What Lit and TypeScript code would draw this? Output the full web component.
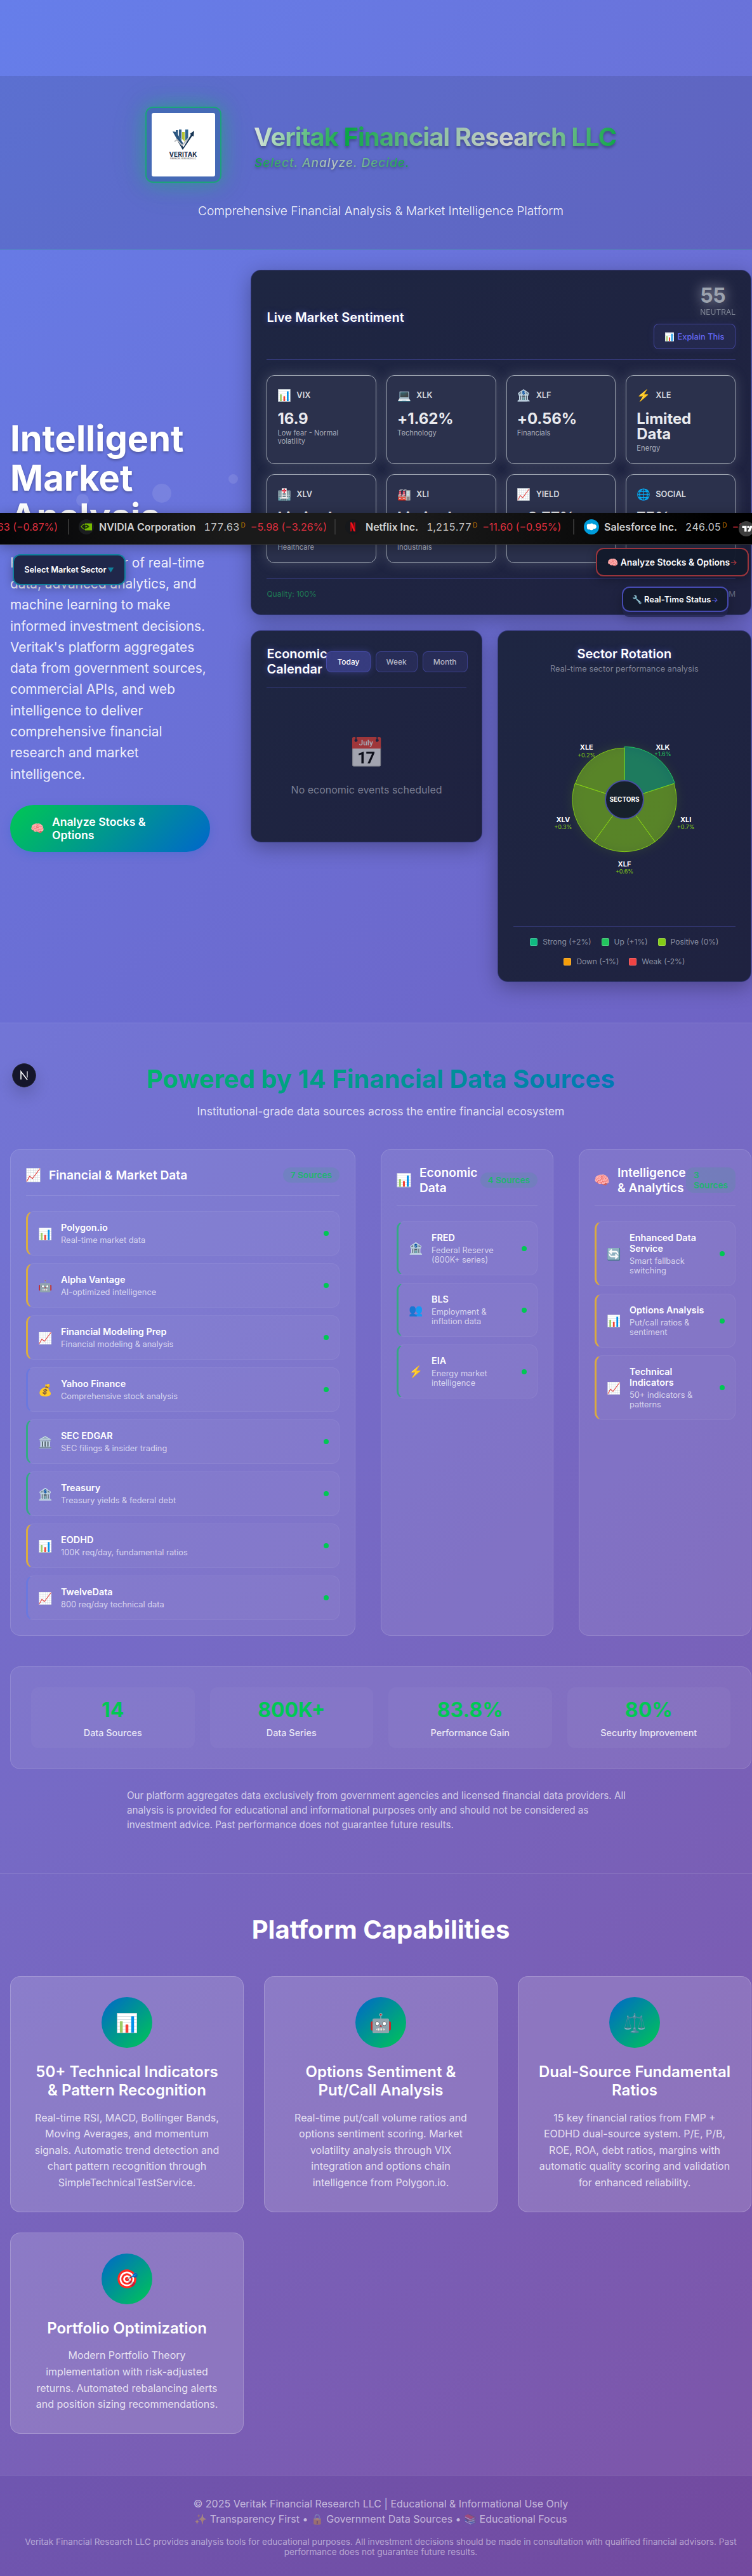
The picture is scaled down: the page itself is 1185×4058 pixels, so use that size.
import { LitElement, html, css, svg } from "lit";
import { customElement } from "lit/decorators.js";

const FONT = css`Inter, "Liberation Sans", "Noto Color Emoji", sans-serif`;

type Metric = { icon: string; name: string; value: string; note: string };
const METRICS: Metric[] = [
  { icon: "📊", name: "VIX", value: "16.9", note: "Low fear - Normal volatility" },
  { icon: "💻", name: "XLK", value: "+1.62%", note: "Technology" },
  { icon: "🏦", name: "XLF", value: "+0.56%", note: "Financials" },
  { icon: "⚡", name: "XLE", value: "Limited Data", note: "Energy" },
  { icon: "🏥", name: "XLV", value: "Limited Data", note: "Healthcare" },
  { icon: "🏭", name: "XLI", value: "Limited Data", note: "Industrials" },
  { icon: "📈", name: "YIELD", value: "+0.77%", note: "10Y-2Y" },
  { icon: "🌐", name: "SOCIAL", value: "75%", note: "Sentiment" },
];

type Source = { icon: string; name: string; desc: string; tier: "premium" | "free" | "gov" };
type Group = { icon: string; title: string; count: string; narrow?: boolean; items: Source[] };
const GROUPS: Group[] = [
  {
    icon: "📈", title: "Financial & Market Data", count: "7 Sources",
    items: [
      { icon: "📊", name: "Polygon.io", desc: "Real-time market data", tier: "premium" },
      { icon: "🤖", name: "Alpha Vantage", desc: "AI-optimized intelligence", tier: "premium" },
      { icon: "📈", name: "Financial Modeling Prep", desc: "Financial modeling & analysis", tier: "premium" },
      { icon: "💰", name: "Yahoo Finance", desc: "Comprehensive stock analysis", tier: "free" },
      { icon: "🏛️", name: "SEC EDGAR", desc: "SEC filings & insider trading", tier: "gov" },
      { icon: "🏦", name: "Treasury", desc: "Treasury yields & federal debt", tier: "gov" },
      { icon: "📊", name: "EODHD", desc: "100K req/day, fundamental ratios", tier: "premium" },
      { icon: "📈", name: "TwelveData", desc: "800 req/day technical data", tier: "free" },
    ],
  },
  {
    icon: "📊", title: "Economic Data", count: "4 Sources",
    items: [
      { icon: "🏦", name: "FRED", desc: "Federal Reserve (800K+ series)", tier: "gov" },
      { icon: "👥", name: "BLS", desc: "Employment & inflation data", tier: "gov" },
      { icon: "⚡", name: "EIA", desc: "Energy market intelligence", tier: "gov" },
    ],
  },
  {
    icon: "🧠", title: "Intelligence & Analytics", count: "3 Sources", narrow: true,
    items: [
      { icon: "🔄", name: "Enhanced Data Service", desc: "Smart fallback switching", tier: "premium" },
      { icon: "📊", name: "Options Analysis", desc: "Put/call ratios & sentiment", tier: "premium" },
      { icon: "📈", name: "Technical Indicators", desc: "50+ indicators & patterns", tier: "premium" },
    ],
  },
];

const STATS = [
  ["14", "Data Sources"],
  ["800K+", "Data Series"],
  ["83.8%", "Performance Gain"],
  ["80%", "Security Improvement"],
];

const CAPABILITIES = [
  { icon: "📊", title: "50+ Technical Indicators & Pattern Recognition", text: "Real-time RSI, MACD, Bollinger Bands, Moving Averages, and momentum signals. Automatic trend detection and chart pattern recognition through SimpleTechnicalTestService." },
  { icon: "🤖", title: "Options Sentiment & Put/Call Analysis", text: "Real-time put/call volume ratios and options sentiment scoring. Market volatility analysis through VIX integration and options chain intelligence from Polygon.io." },
  { icon: "⚖️", title: "Dual-Source Fundamental Ratios", text: "15 key financial ratios from FMP + EODHD dual-source system. P/E, P/B, ROE, ROA, debt ratios, margins with automatic quality scoring and validation for enhanced reliability." },
  { icon: "🎯", title: "Portfolio Optimization", text: "Modern Portfolio Theory implementation with risk-adjusted returns. Automated rebalancing alerts and position sizing recommendations." },
];

const SECTORS = [
  { name: "XLK", pct: "+1.6%", r: 83.5, color: "#22c55e", fill: "#10b981", lx: 235.3, ly: 145.5, dy: 10.8 },
  { name: "XLI", pct: "+0.7%", r: 82, color: "#84cc16", fill: "#84cc16", lx: 271.7, ly: 260, dy: 11 },
  { name: "XLF", pct: "+0.6%", r: 82, color: "#84cc16", fill: "#84cc16", lx: 175, ly: 330, dy: 11 },
  { name: "XLV", pct: "+0.3%", r: 82, color: "#84cc16", fill: "#84cc16", lx: 78.3, ly: 260, dy: 11 },
  { name: "XLE", pct: "+0.2%", r: 81.5, color: "#84cc16", fill: "#84cc16", lx: 115.3, ly: 146, dy: 12 },
];

const LEGEND = [
  ["#10b981", "Strong (+2%)"],
  ["#22c55e", "Up (+1%)"],
  ["#84cc16", "Positive (0%)"],
  ["#f59e0b", "Down (-1%)"],
  ["#ef4444", "Weak (-2%)"],
];

/** Path of one 72 degree slice around the chart centre. */
function slice(i: number, r: number): string {
  const cx = 175, cy = 224.7;
  const p = (a: number) => {
    const t = ((a - 90) * Math.PI) / 180;
    return `${(cx + r * Math.cos(t)).toFixed(2)} ${(cy + r * Math.sin(t)).toFixed(2)}`;
  };
  return `M${cx} ${cy}L${p(i * 72)}A${r} ${r} 0 0 1 ${p(i * 72 + 72)}Z`;
}

@customElement("site-header")
class SiteHeader extends LitElement {
  static styles = css`
    :host { display: block; box-sizing: border-box; height: 273px; padding-top: 48px; background: rgba(0, 0, 0, 0.1); border-bottom: 1px solid rgba(0, 200, 83, 0.3); }
    .brand { display: flex; align-items: center; justify-content: center; gap: 52px; }
    .logo { box-sizing: border-box; width: 120px; height: 120px; padding: 8px; border: 2px solid rgba(0, 200, 83, 0.6); border-radius: 12px; background: rgba(0, 100, 120, 0.25); box-shadow: 0 0 30px rgba(0, 200, 83, 0.4), 0 0 60px rgba(0, 200, 83, 0.12); }
    .logo svg { display: block; width: 100px; height: 100px; border-radius: 3px; }
    .words { width: 570px; padding-top: 3px; }
    .name { margin: 0; font-size: 40px; font-weight: 700; line-height: 48px; white-space: nowrap; letter-spacing: -1px; margin-left: -1px; width: 573px; color: transparent; background: linear-gradient(100deg, #dfe6e0 0%, #0aa544 26%, #86bf9c 48%, #cfd0d0 70%, #0aa544 100%); -webkit-background-clip: text; background-clip: text; filter: drop-shadow(0 3px 2px rgba(0, 0, 0, 0.3)); }
    .tag { margin: 5px 0 0; width: 246px; font-size: 19.2px; line-height: 23px; font-weight: 500; font-style: italic; letter-spacing: 0.9px; white-space: nowrap; color: transparent; background: linear-gradient(90deg, #0aa544 0%, #b9c4c4 50%, #0aa544 100%); -webkit-background-clip: text; background-clip: text; filter: drop-shadow(0 2px 2px rgba(0, 0, 0, 0.35)); }
    .sub { margin: 32px 0 0; text-align: center; font-size: 19.2px; font-weight: 300; line-height: 24px; color: rgba(255, 255, 255, 0.95); }
  `;
  render() {
    return html`
      <div class="brand">
        <div class="logo">
          <svg viewBox="0 0 100 100">
            <rect width="100" height="100" fill="#fff" />
            <path d="M33 29l6 1 10 17v11z" fill="#2a5580" />
            <path d="M38 27h3.5v10L38 32zM43 26h4v17l-4-6z" fill="#345f88" />
            <path d="M48 30h4v15l-4-4z" fill="#b5c334" /><path d="M53 26h4.5v13L53 44z" fill="#2f6690" />
            <path d="M49 58l-10-17 5 4 6 9L62 34l-2-1 7-5-1 9-2-1z" fill="#173554" />
            <path d="M36 45l4-3 8 9 9-10" fill="none" stroke="#b9bcc0" stroke-width="2" />
            <text x="49.5" y="69" text-anchor="middle" font-family="Inter" font-weight="700" font-size="10" textLength="44" fill="#17304f">VERITAK</text>
            <text x="49.5" y="73.4" text-anchor="middle" font-family="Inter" font-weight="500" font-size="3.2" textLength="41" fill="#555">FINANCIAL RESEARCH LLC</text>
          </svg>
        </div>
        <div class="words">
          <h1 class="name">Veritak Financial Research LLC</h1>
          <p class="tag">Select. Analyze. Decide.</p>
        </div>
      </div>
      <p class="sub">Comprehensive Financial Analysis &amp; Market Intelligence Platform</p>
    `;
  }
}

const panel = css`
  .panel { box-sizing: border-box; padding: 24px; border: 1px solid rgba(99, 102, 241, 0.3); border-radius: 16px; background: linear-gradient(135deg, #1e2642 0%, #1f2240 100%); box-shadow: 0 8px 32px rgba(0, 0, 0, 0.3); }
  .h { margin: 0; font-size: 20px; line-height: 24px; font-weight: 600; color: #fff; text-shadow: 0 0 10px rgba(99, 102, 241, 0.6); }
`;

@customElement("market-sentiment")
class MarketSentiment extends LitElement {
  static styles = [panel, css`
    :host { display: block; }
    .panel { height: 544px; }
    .top { display: flex; align-items: center; justify-content: space-between; height: 100px; padding-bottom: 16px; border-bottom: 1px solid rgba(99, 102, 241, 0.35); }
    .side { display: flex; flex-direction: column; align-items: flex-end; }
    .score { color: #9ca3af; text-shadow: 0 0 20px rgba(200, 200, 210, 0.9); }
    .num { font-size: 32px; line-height: 32px; font-weight: 700; letter-spacing: -0.5px; }
    .mood { margin-top: 2px; font-size: 12px; line-height: 15px; opacity: 0.75; }
    .explain { box-sizing: border-box; margin-top: 11px; height: 40px; width: 129px; display: flex; align-items: center; justify-content: center; gap: 4px; border: 1px solid rgba(99, 102, 241, 0.45); border-radius: 8px; background: rgba(99, 102, 241, 0.08); color: #6366f1; font-size: 12.8px; font-weight: 500; box-shadow: 0 0 12px rgba(99, 102, 241, 0.1); }
    .grid { display: grid; grid-template-columns: repeat(4, 1fr); grid-auto-rows: 140px; gap: 16px; margin-top: 24px; }
    .card { box-sizing: border-box; padding: 16px; border: 1px solid #9ca3af; border-radius: 12px; background: #2b314c; box-shadow: 0 0 20px rgba(156, 163, 175, 0.3); color: #e9eaee; }
    .row { display: flex; align-items: center; gap: 8px; height: 28px; }
    .icon { font-size: 17.6px; }
    .label { font-size: 12.8px; font-weight: 600; color: #d5d8de; }
    .value { margin-top: 12px; font-size: 24px; line-height: 24px; font-weight: 700; letter-spacing: -0.1px; }
    .note { margin-top: 4px; font-size: 11.2px; line-height: 13px; color: #a9adba; }
    .foot { display: flex; justify-content: space-between; margin-top: 24px; padding-top: 16px; border-top: 1px solid rgba(99, 102, 241, 0.25); font-size: 12px; line-height: 15px; color: #666b80; }
    .q { color: #1e7d55; }
  `];
  render() {
    return html`
      <div class="panel">
        <div class="top">
          <h3 class="h">Live Market Sentiment</h3>
          <div class="side">
            <div class="score"><div class="num">55</div><div class="mood">NEUTRAL</div></div>
            <div class="explain"><span>📊</span><span>Explain This</span></div>
          </div>
        </div>
        <div class="grid">
          ${METRICS.map((m) => html`
            <div class="card">
              <div class="row"><span class="icon">${m.icon}</span><span class="label">${m.name}</span></div>
              <div class="value">${m.value}</div>
              <div class="note">${m.note}</div>
            </div>`)}
        </div>
        <div class="foot"><span class="q">Quality: 100%</span><span>Updated: 8:38:07 PM</span></div>
      </div>
    `;
  }
}

@customElement("economic-calendar")
class EconomicCalendar extends LitElement {
  static styles = [panel, css`
    .panel { height: 334px; }
    .top { display: flex; align-items: center; justify-content: space-between; height: 48px; padding-bottom: 16px; border-bottom: 1px solid rgba(99, 102, 241, 0.35); }
    .h { width: 94px; }
    .tabs { display: flex; gap: 8px; flex: none; }
    .tab { box-sizing: border-box; height: 33px; padding: 0 16px; line-height: 31px; border: 1px solid rgba(99, 102, 241, 0.35); border-radius: 8px; background: rgba(99, 102, 241, 0.13); color: #b3b5c6; font-size: 12px; font-weight: 500; }
    .on { background: rgba(99, 102, 241, 0.35); color: #fff; box-shadow: 0 0 12px rgba(99, 102, 241, 0.3); }
    .empty { display: flex; flex-direction: column; align-items: center; padding-top: 74px; color: #7a7e92; font-size: 16px; line-height: 20px; }
    .big { font-size: 46px; line-height: 56px; opacity: 0.6; margin-bottom: 21px; }
  `];
  render() {
    return html`
      <div class="panel">
        <div class="top">
          <h3 class="h">Economic Calendar</h3>
          <div class="tabs"><span class="tab on">Today</span><span class="tab">Week</span><span class="tab">Month</span></div>
        </div>
        <div class="empty"><span class="big">📅</span><span>No economic events scheduled</span></div>
      </div>
    `;
  }
}

@customElement("sector-rotation")
class SectorRotation extends LitElement {
  static styles = [panel, css`
    .panel { height: 554px; }
    .h, .sub { text-align: center; }
    .sub { margin: 3px 0 0; font-size: 12.8px; line-height: 17px; color: #7f8397; }
    .chart { display: block; width: 350px; height: 350px; margin-top: -27px; overflow: visible; }
    .legend { display: flex; flex-wrap: wrap; justify-content: center; gap: 16px; margin-top: 74px; padding-top: 16px; border-top: 1px solid rgba(99, 102, 241, 0.25); font-size: 12px; line-height: 15px; color: #8b8fa0; }
    .key { display: flex; align-items: center; gap: 8px; }
    .sw { box-sizing: border-box; width: 12px; height: 12px; border-radius: 2px; border: 1px solid rgba(255, 255, 255, 0.2); }
    text { text-anchor: middle; }
    .n { font-size: 11px; font-weight: 700; fill: #fff; }
    .p { font-size: 9px; }
    .c { font-size: 10px; font-weight: 700; fill: #fff; }
  `];
  render() {
    return html`
      <div class="panel">
        <h3 class="h">Sector Rotation</h3>
        <p class="sub">Real-time sector performance analysis</p>
        <svg class="chart" viewBox="0 0 350 350">
          <defs><filter id="g" x="-30%" y="-30%" width="160%" height="160%"><feGaussianBlur stdDeviation="9" /></filter></defs>
          <circle cx="175" cy="224.7" r="82" fill="#84cc16" opacity="0.14" filter="url(#g)" />
          ${SECTORS.map((s, i) => svg`<path d=${slice(i, s.r)} fill=${s.fill} fill-opacity="0.5" stroke=${s.color} stroke-width="1" />`)}
          <circle cx="175" cy="224.7" r="30" fill="#17212b" stroke="#4750a0" stroke-width="2" />
          <text class="c" x="175" y="228">SECTORS</text>
          ${SECTORS.map((s) => svg`<text class="n" x=${s.lx} y=${s.ly}>${s.name}</text><text class="p" x=${s.lx} y=${s.ly + s.dy} fill=${s.color}>${s.pct}</text>`)}
        </svg>
        <div class="legend">${LEGEND.map(([c, t]) => html`<span class="key"><span class="sw" style="background:${c}"></span>${t}</span>`)}</div>
      </div>
    `;
  }
}

@customElement("data-sources")
class DataSources extends LitElement {
  static styles = css`
    :host { display: block; box-sizing: border-box; height: 1340px; padding: 64px 16px 0; background: rgba(255, 255, 255, 0.05); border-top: 1px solid rgba(255, 255, 255, 0.1); }
    .title { margin: 0; text-align: center; font-size: 40px; line-height: 48px; font-weight: 700; color: transparent; background: linear-gradient(135deg, #00c853, #0066cc); -webkit-background-clip: text; background-clip: text; }
    .lead { margin: 16px 0 48px; text-align: center; font-size: 17.6px; line-height: 22px; color: rgba(255, 255, 255, 0.8); }
    .groups { display: grid; grid-template-columns: 544px 272px 272px; gap: 40px; height: 767px; }
    .group, .stats { box-sizing: border-box; padding: 24px; border: 1px solid rgba(255, 255, 255, 0.13); border-radius: 16px; background: rgba(255, 255, 255, 0.08); }
    .head { display: flex; align-items: center; gap: 12px; min-height: 32px; padding-bottom: 16px; margin-bottom: 24px; border-bottom: 1px solid rgba(255, 255, 255, 0.13); }
    .hi { flex: none; width: 24px; font-size: 20px; display: flex; justify-content: center; }
    .ht { flex: 1; margin: 0; font-size: 19.2px; line-height: 24px; font-weight: 600; color: #fff; min-width: 0; }
    .badge { flex: none; padding: 4px 12px; border-radius: 12px; background: rgba(0, 200, 83, 0.1); color: rgba(0, 200, 83, 0.75); font-size: 13.6px; line-height: 16px; font-weight: 600; }
    .narrow .ht { flex: none; width: 108px; margin-right: -12px; white-space: normal; }
    .narrow .badge { box-sizing: border-box; width: 78px; }
    .items { display: flex; flex-direction: column; gap: 12px; }
    .item { display: flex; align-items: center; gap: 12px; padding: 16px; border: 1px solid rgba(255, 255, 255, 0.06); border-left: 3px solid; border-radius: 12px; background: rgba(255, 255, 255, 0.03); }
    .premium { border-left-color: rgba(255, 193, 7, 0.7); }
    .gov { border-left-color: rgba(0, 200, 83, 0.6); }
    .free { border-left-color: #6b78de; }
    .ii { flex: none; width: 24px; font-size: 18px; display: flex; justify-content: center; }
    .body { flex: 1; }
    .n { font-size: 14.4px; line-height: 17px; font-weight: 600; color: #fff; }
    .d { margin-top: 4px; font-size: 12.8px; line-height: 15px; color: rgba(255, 255, 255, 0.7); }
    .dot { flex: none; width: 8px; height: 8px; border-radius: 50%; background: #00c853; }
    .stats { display: grid; grid-template-columns: repeat(4, 1fr); gap: 24px; margin-top: 48px; padding: 32px; height: 162px; }
    .stat { padding: 16px 0; height: 64px; text-align: center; border-radius: 12px; background: rgba(255, 255, 255, 0.035); }
    .num { font-size: 32px; line-height: 39px; font-weight: 700; color: #00c853; }
    .cap { margin-top: 8px; font-size: 14.4px; line-height: 17px; font-weight: 500; color: rgba(255, 255, 255, 0.85); }
    .fine { width: 800px; margin: 31px auto 0; font-size: 15.2px; line-height: 22.8px; color: rgba(255, 255, 255, 0.7); }
  `;
  render() {
    return html`
      <h2 class="title">Powered by 14 Financial Data Sources</h2>
      <p class="lead">Institutional-grade data sources across the entire financial ecosystem</p>
      <div class="groups">
        ${GROUPS.map((g) => html`
          <div class="group">
            <div class="head ${g.narrow ? "narrow" : ""}"><span class="hi">${g.icon}</span><h3 class="ht">${g.title}</h3><span class="badge">${g.count}</span></div>
            <div class="items">
              ${g.items.map((s) => html`
                <div class="item ${s.tier}"><span class="ii">${s.icon}</span>
                  <div class="body"><div class="n">${s.name}</div><div class="d">${s.desc}</div></div>
                  <span class="dot"></span></div>`)}
            </div>
          </div>`)}
      </div>
      <div class="stats">${STATS.map(([n, l]) => html`<div class="stat"><div class="num">${n}</div><div class="cap">${l}</div></div>`)}</div>
      <p class="fine">Our platform aggregates data exclusively from government agencies and licensed financial data providers. All analysis is provided for educational and informational purposes only and should not be considered as investment advice. Past performance does not guarantee future results.</p>
    `;
  }
}

@customElement("platform-capabilities")
class PlatformCapabilities extends LitElement {
  static styles = css`
    :host { display: block; box-sizing: border-box; height: 948px; padding: 64px 16px 0; background: rgba(255, 255, 255, 0.05); border-top: 1px solid rgba(255, 255, 255, 0.1); }
    .title { margin: 0 0 49px; text-align: center; font-size: 40px; line-height: 48px; font-weight: 700; color: #fff; }
    .grid { display: grid; grid-template-columns: repeat(3, 368px); gap: 32px; align-items: start; }
    .card { box-sizing: border-box; padding: 32px; border: 1px solid rgba(255, 255, 255, 0.2); border-radius: 16px; background: rgba(255, 255, 255, 0.15); text-align: center; }
    .icon { display: flex; align-items: center; justify-content: center; width: 80px; height: 80px; margin: 0 auto 24px; border-radius: 50%; background: linear-gradient(135deg, #0066cc, #00c853); font-size: 29px; }
    .h { margin: 0 0 16px; font-size: 24px; line-height: 28.8px; font-weight: 600; color: #fff; }
    .t { margin: 0; font-size: 16px; line-height: 25.6px; color: rgba(255, 255, 255, 0.8); }
  `;
  render() {
    return html`
      <h2 class="title">Platform Capabilities</h2>
      <div class="grid">
        ${CAPABILITIES.map((c) => html`<div class="card"><div class="icon">${c.icon}</div><h3 class="h">${c.title}</h3><p class="t">${c.text}</p></div>`)}
      </div>
    `;
  }
}

@customElement("ticker-tape")
class TickerTape extends LitElement {
  static styles = css`
    :host { display: block; box-sizing: border-box; height: 50px; overflow: hidden; border-bottom: 1px solid #2c2c2c; background: linear-gradient(90deg, #050507 0%, #1a1a1a 30%, #1a1a1a 55%, #000 95%); font-size: 16px; color: #c9c9c9; }
    .strip { display: grid; grid-template-columns: 107px 420px 376px 320px; height: 49px; align-items: center; white-space: nowrap; width: 1223px; }
    .q { display: flex; align-items: center; box-sizing: border-box; height: 24px; margin-top: -5px; border-left: 2px solid #333; padding-left: 15px; }
    .first { border: 0; padding: 0; justify-content: flex-end; margin-right: 16px; }
    .logo { flex: none; width: 24px; height: 24px; margin-right: 8px; }
    .name { font-weight: 600; margin-right: 13px; color: #d2d2d2; }
    .price { font-variant-numeric: tabular-nums; }
    .delay { color: #c77700; font-size: 10px; margin: -6px 8px 0 2px; }
    .down { color: #e0303f; }
  `;
  render() {
    return html`
      <div class="strip">
        <div class="q first"><span class="down">−1.63 (−0.87%)</span></div>
        <div class="q">
          <svg class="logo" viewBox="0 0 24 24"><circle cx="12" cy="12" r="12" fill="#1b1d20" /><path d="M10 6.500h11v11H10z" fill="#76b900" /><path d="M4 11.500c2-3 4-4 7-4 3 0 5 1.500 7 4-2 3-4 4.500-7 4.500-3 0-5-1.500-7-4.500z" fill="none" stroke="#76b900" stroke-width="1.200" /><path d="M10 9.500c3-1 5 .5 6 2-2 2.500-4 3-6 2.500zM7 11.500c1-1.500 2-2 4-2 1.500 0 2 1 3 2-1 1-2 2-3 2s-3-.5-4-2z" fill="none" stroke="#17300a" stroke-width="1.100" /></svg>
          <span class="name">NVIDIA Corporation</span><span class="price">177.63</span><span class="delay">D</span><span class="down">−5.98 (−3.26%)</span>
        </div>
        <div class="q">
          <svg class="logo" viewBox="0 0 24 24"><circle cx="12" cy="12" r="12" fill="#16181b" /><path d="M8 5h2.800v14L8 19.300z" fill="#b1060f" /><path d="M13.200 5H16v14.300l-2.800-.3z" fill="#b1060f" /><path d="M8 5h2.800L16 19.300l-2.800-.3z" fill="#f3131e" /></svg>
          <span class="name">Netflix Inc.</span><span class="price">1,215.77</span><span class="delay">D</span><span class="down">−11.60 (−0.95%)</span>
        </div>
        <div class="q">
          <svg class="logo" viewBox="0 0 24 24"><circle cx="12" cy="12" r="12" fill="#009ddc" /><g fill="#fff"><circle cx="8" cy="10.500" r="3.300" /><circle cx="12.300" cy="9.800" r="3.200" /><circle cx="16.300" cy="11.600" r="3.500" /><circle cx="8" cy="13.300" r="3" /><circle cx="12" cy="14" r="3.200" /></g></svg>
          <span class="name">Salesforce Inc.</span><span class="price">246.05</span><span class="delay">D</span><span class="down">−3.12 (−1.25%)</span>
        </div>
      </div>
    `;
  }
}

@customElement("app-root")
class AppRoot extends LitElement {
  static styles = css`
    :host { display: block; position: relative; width: 1185px; height: 4058px; overflow: hidden; font-family: ${FONT}; }
    .page { position: relative; box-sizing: border-box; width: 1200px; height: 4058px; padding-top: 120px; background: linear-gradient(135deg, #667eea 0%, #764ba2 100%); }
    .hero { display: grid; grid-template-columns: 1fr 2.5fr; column-gap: 64px; box-sizing: border-box; height: 1218px; padding: 32px 16px 64px; }
    .intro { padding-top: 236px; }
    .h1 { margin: 0 0 24px; font-size: 56px; line-height: 61.6px; font-weight: 700; color: #fff; text-shadow: 0 2px 4px rgba(0, 0, 0, 0.3); }
    .p { margin: 0 0 32px; font-size: 20.8px; line-height: 33.28px; color: rgba(255, 255, 255, 0.9); }
    .cta { display: flex; align-items: center; gap: 12px; box-sizing: border-box; height: 74px; padding: 0 32px; border-radius: 37px; background: linear-gradient(135deg, #00c853, #0066cc); box-shadow: 0 4px 15px rgba(0, 102, 204, 0.2); color: #fff; font-size: 17.6px; line-height: 21px; font-weight: 600; }
    .dash { display: grid; grid-template-columns: minmax(0, 1fr) 400.3px; gap: 24px; align-items: start; align-content: start; }
    .dash market-sentiment { grid-column: 1 / -1; }
    .footer { box-sizing: border-box; height: 159px; padding: 32px 16px 0; background: rgba(0, 0, 0, 0.02); border-top: 1px solid rgba(255, 255, 255, 0.1); text-align: center; color: rgba(255, 255, 255, 0.6); }
    .f1 { margin: 0; font-size: 16px; line-height: 24px; }
    .em { opacity: 0.6; }
    .f2 { margin: 16px 0 0; font-size: 13.6px; line-height: 16px; color: rgba(255, 255, 255, 0.5); }
    .over { position: absolute; box-sizing: border-box; display: flex; align-items: center; justify-content: center; white-space: nowrap; color: #fff; border-radius: 12px; font-weight: 600; }
    .tape { position: absolute; left: 0; top: 808px; width: 1185px; box-shadow: 0 4px 20px rgba(0, 0, 0, 0.3); }
    .tv { position: absolute; left: 1164px; top: 821px; width: 24px; height: 24px; }
    .sector { left: 20px; top: 873px; width: 178px; height: 49px; border: 2px solid #11809e; background: #20274a; font-size: 12.8px; box-shadow: 0 4px 15px rgba(0, 0, 0, 0.3); }
    .sector i { font-style: normal; color: #11809e; font-size: 10px; margin-left: 2px; }
    .analyze { left: 939px; top: 863px; width: 241px; height: 45px; border: 2px solid #9b343b; background: rgba(19, 26, 43, 0.97); font-size: 13.9px; box-shadow: 0 4px 15px rgba(0, 0, 0, 0.3); }
    .analyze i { font-style: normal; color: #b2383f; font-weight: 500; font-size: 12px; }
    .status { left: 980px; top: 924px; width: 168px; height: 40px; border: 2px solid #464ab0; background: rgba(19, 26, 43, 0.97); font-size: 12.8px; box-shadow: 0 9px 0 -1px rgba(35, 38, 80, 0.75), 0 9px 18px rgba(0, 0, 0, 0.25); }
    .status i { font-style: normal; color: #5257d6; font-weight: 500; font-size: 12px; }
    .e { margin-right: 3px; }
    .bubble { position: absolute; border-radius: 50%; background: rgba(255, 255, 255, 0.1); }
    .b1 { left: 120px; top: 778px; width: 20px; height: 20px; }
    .b2 { left: 240px; top: 762px; width: 30px; height: 30px; }
    .b3 { left: 360px; top: 747px; width: 15px; height: 15px; }
    .dev { position: absolute; left: 19px; top: 1675px; width: 38px; height: 38px; border-radius: 50%; box-shadow: 0 12px 24px rgba(0, 0, 0, 0.16); }
  `;
  render() {
    return html`
      <div class="page">
        <site-header></site-header>
        <section class="hero">
          <div class="intro">
            <h1 class="h1">Intelligent Market Analysis</h1>
            <p class="p">Harness the power of real-time data, advanced analytics, and machine learning to make informed investment decisions. Veritak's platform aggregates data from government sources, commercial APIs, and web intelligence to deliver comprehensive financial research and market intelligence.</p>
            <div class="cta"><span>🧠</span><span>Analyze Stocks &amp; Options</span></div>
          </div>
          <div class="dash">
            <market-sentiment></market-sentiment>
            <economic-calendar></economic-calendar>
            <sector-rotation></sector-rotation>
          </div>
        </section>
        <data-sources></data-sources>
        <platform-capabilities></platform-capabilities>
        <footer class="footer">
          <p class="f1">© 2025 Veritak Financial Research LLC | Educational &amp; Informational Use Only</p>
          <p class="f1"><span class="em">✨</span> Transparency First • <span class="em">🔒</span> Government Data Sources • <span class="em">📚</span> Educational Focus</p>
          <p class="f2">Veritak Financial Research LLC provides analysis tools for educational purposes. All investment decisions should be made in consultation with qualified financial advisors. Past performance does not guarantee future results.</p>
        </footer>
        <span class="bubble b1"></span><span class="bubble b2"></span><span class="bubble b3"></span>
        <ticker-tape class="tape"></ticker-tape>
        <svg class="tv" viewBox="0 0 24 24"><circle cx="12" cy="12" r="12" fill="#3d3d3d" /><path d="M5.500 7.500h7v9H9v-5.500H5.500z" fill="#fff" /><circle cx="15" cy="9.300" r="1.800" fill="#fff" /><path d="M18 7.500h4l-4 9h-4z" fill="#fff" /></svg>
        <div class="over sector">Select Market Sector<i>▼</i></div>
        <div class="over analyze"><span class="e">🧠</span>Analyze Stocks &amp; Options<i>→</i></div>
        <div class="over status"><span class="e">🔧</span>Real-Time Status<i>→</i></div>
        <svg class="dev" viewBox="0 0 38 38"><circle cx="19" cy="19" r="18.500" fill="#15162b" stroke="#2c2d40" stroke-width="1" /><path d="M14 25.500V13l10 13" fill="none" stroke="#fff" stroke-width="1.600" /><path d="M24 12.500v10" stroke="#fff" stroke-opacity="0.8" stroke-width="1.500" /></svg>
      </div>
    `;
  }
}
